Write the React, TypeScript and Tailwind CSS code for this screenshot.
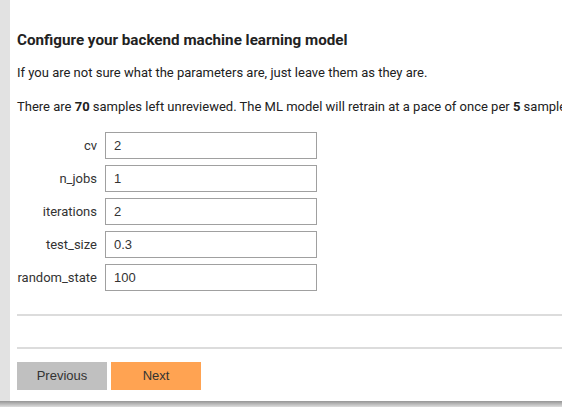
import React from 'react';

const params = [
  { name: 'cv', value: '2' },
  { name: 'n_jobs', value: '1' },
  { name: 'iterations', value: '2' },
  { name: 'test_size', value: '0.3' },
  { name: 'random_state', value: '100' },
];

export default function App() {
  return (
    <div className="w-[562px] h-[407px] overflow-hidden bg-[#e0e0e0] flex flex-col" style={{ fontFamily: 'Roboto, "Liberation Sans", sans-serif' }}>
      <div className="flex h-[401px] shrink-0">
        <div className="w-[10px] shrink-0 bg-[#e2e2e2]" />
        <div className="flex-1 min-w-0 overflow-hidden bg-white pl-[7px] pt-[31px] text-[#212121] whitespace-nowrap">
          <h2 className="text-[15.2px] font-bold leading-[18px] text-[#222]">Configure your backend machine learning model</h2>
          <p className="mt-[15px] text-[13px] leading-[18px]">If you are not sure what the parameters are, just leave them as they are.</p>
          <p className="mt-[16px] text-[13px] leading-[18px]">
            There are <b>70</b> samples left unreviewed. The ML model will retrain at a pace of once per <b>5</b> samples.
          </p>

          <div className="mt-[16px] flex flex-col gap-[6px]">
            {params.map((p) => (
              <div key={p.name} className="flex items-center">
                <label className="w-[80px] text-right text-[13px] text-[#333]">{p.name}</label>
                <input
                  defaultValue={p.value}
                  className="ml-[8px] w-[212px] h-[27px] border border-[#a0a0a0] px-[8px] text-[13px] text-[#333] outline-none"
                  style={{ fontFamily: '"Liberation Sans", Arial, sans-serif' }}
                />
              </div>
            ))}
          </div>

          <div className="mt-[23px] h-[2px] bg-[#dcdcdc]" />
          <div className="mt-[31px] h-[2px] bg-[#dcdcdc]" />

          <div className="mt-[13px] flex gap-[4px]" style={{ fontFamily: '"Liberation Sans", Arial, sans-serif' }}>
            <button className="w-[90px] h-[28px] bg-[#c0c0c0] text-[13px] text-[#333]">Previous</button>
            <button className="w-[90px] h-[28px] bg-[#ffa352] text-[13px] text-[#333]">Next</button>
          </div>
        </div>
      </div>
      <div className="h-[6px] shrink-0 bg-gradient-to-b from-[#959595] to-[#dedede]" />
    </div>
  );
}
